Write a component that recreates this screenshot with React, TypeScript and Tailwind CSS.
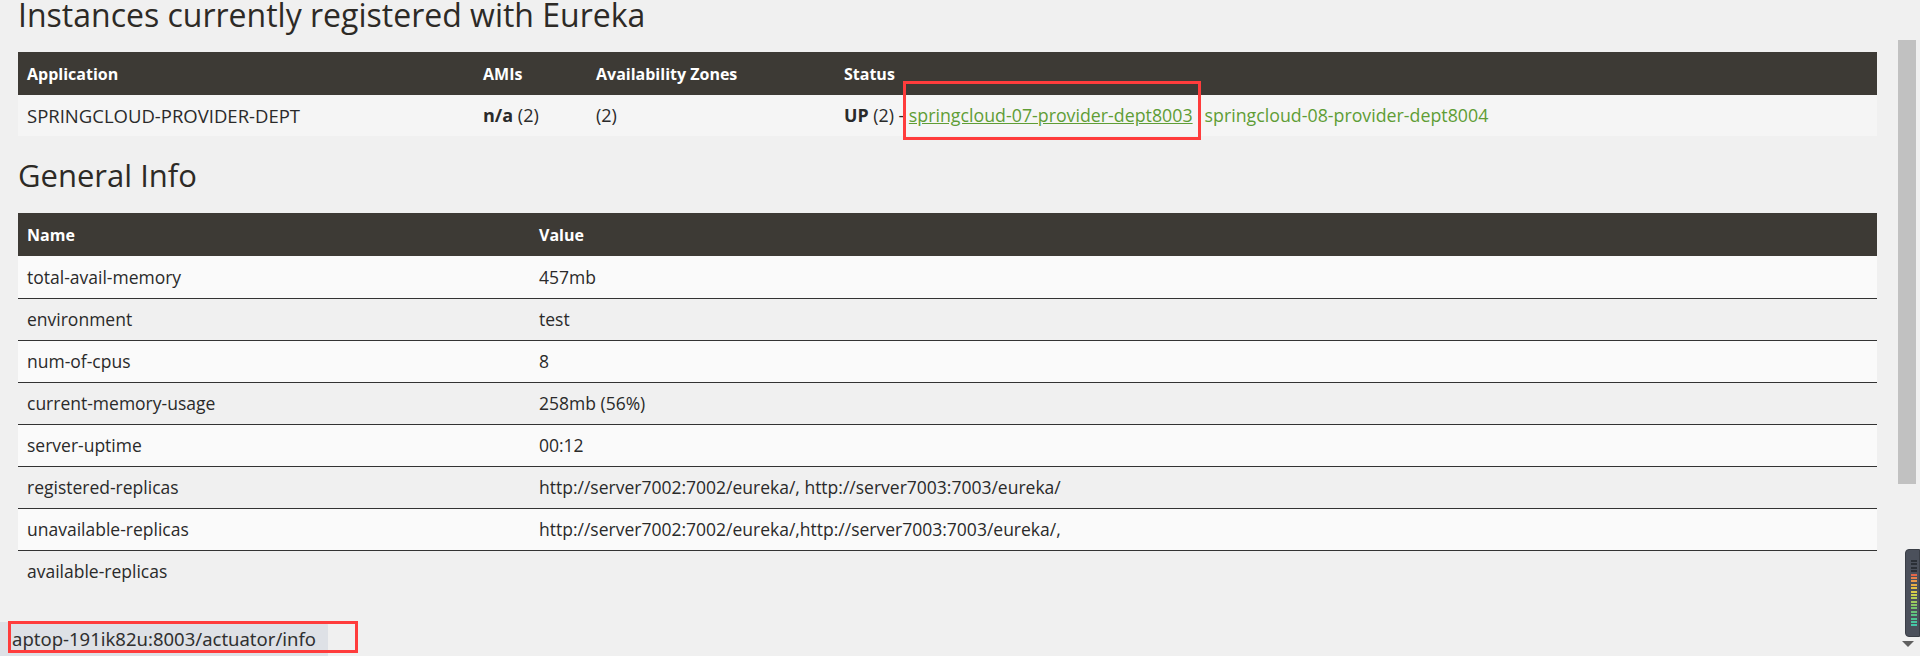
import React from "react";

const rows: [string, string][] = [
  ["total-avail-memory", "457mb"],
  ["environment", "test"],
  ["num-of-cpus", "8"],
  ["current-memory-usage", "258mb (56%)"],
  ["server-uptime", "00:12"],
  ["registered-replicas", "http://server7002:7002/eureka/, http://server7003:7003/eureka/"],
  ["unavailable-replicas", "http://server7002:7002/eureka/,http://server7003:7003/eureka/,"],
  ["available-replicas", ""],
];

const meterColors = [
  "#2b2f36", "#2b2f36", "#2b2f36", "#2b2f36",
  "#e2664a", "#e6804a", "#e8984a", "#e6ac45", "#e3bf45", "#d9cc47", "#c9d04d",
  "#b5cf55", "#9fcb5c", "#8bc764", "#77c46d", "#67c378", "#5ac384", "#4fc491", "#48c59d", "#44c7a8",
];

function Meter() {
  return (
    <div className="absolute right-0 top-[549px] w-[15px] h-[88px] rounded-l-[4px] bg-[#4b505b] border border-[#3a3e46] flex flex-col items-end pr-[2px] pt-[10px] gap-[1.4px]">
      {meterColors.map((c, i) => (
        <div key={i} className="w-[6px] h-[2px]" style={{ backgroundColor: c }} />
      ))}
    </div>
  );
}

export default function App() {
  return (
    <div
      className="relative w-[1920px] h-[656px] overflow-hidden bg-[#f0f0f0] text-[#2a2a2a] flex"
      style={{ fontFamily: '"Open Sans", "Noto Sans", sans-serif' }}
    >
      <div className="w-[1877px] pl-[18px] flex flex-col">
        <h2 className="pt-[1px] text-[32px] leading-[28px] text-[#2d2a26] font-normal">
          Instances currently registered with Eureka
        </h2>
        <table className="mt-[23px] w-full table-fixed border-collapse text-[18px]">
          <colgroup>
            <col className="w-[456px]" />
            <col className="w-[113px]" />
            <col className="w-[248px]" />
            <col />
          </colgroup>
          <thead>
            <tr className="bg-[#3d3a35] text-white h-[43px] text-[16px] text-left">
              <th className="pl-[9px] font-bold">Application</th>
              <th className="pl-[9px] font-bold">AMIs</th>
              <th className="pl-[9px] font-bold">Availability Zones</th>
              <th className="pl-[9px] font-bold">Status</th>
            </tr>
          </thead>
          <tbody>
            <tr className="bg-[#f5f5f5] h-[41px]">
              <td className="pl-[9px] text-[18.5px]">SPRINGCLOUD-PROVIDER-DEPT</td>
              <td className="pl-[9px]">
                <b>n/a</b> (2)
              </td>
              <td className="pl-[9px]">(2)</td>
              <td className="pl-[9px] whitespace-nowrap text-[17.8px]">
                <b>UP</b> (2) - <a className="text-[#5f9d35] underline">springcloud-07-provider-dept8003</a>
                <a className="text-[#5f9d35] ml-[12px]">springcloud-08-provider-dept8004</a>
              </td>
            </tr>
          </tbody>
        </table>

        <h2 className="mt-[25px] text-[31px] leading-[28px] text-[#2d2a26] font-normal">General Info</h2>
        <table className="mt-[24px] w-full table-fixed border-collapse text-[17.5px]">
          <colgroup>
            <col className="w-[512px]" />
            <col />
          </colgroup>
          <thead>
            <tr className="bg-[#3d3a35] text-white h-[43px] text-[16px] text-left">
              <th className="pl-[9px] font-bold">Name</th>
              <th className="pl-[9px] font-bold">Value</th>
            </tr>
          </thead>
          <tbody>
            {rows.map(([n, v], i) => (
              <tr
                key={n}
                className={
                  (i % 2 === 0 ? "bg-[#fafafa] " : "bg-[#f0f0f0] ") +
                  (i === rows.length - 1 ? "h-[42px]" : "h-[42px] border-b border-[#333]")
                }
              >
                <td className="pl-[9px]">{n}</td>
                <td className="pl-[9px]">{v}</td>
              </tr>
            ))}
          </tbody>
        </table>
      </div>

      {/* scrollbar */}
      <div className="w-[43px] flex flex-col items-end pr-[4px] pt-[40px]">
        <div className="w-[18px] h-[444px] bg-[#c1c1c1]" />
      </div>

      {/* status bubble */}
      <div
        className="absolute left-0 bottom-0 w-[328px] h-[34px] bg-[#dee1e6] rounded-tr-[4px] pl-[12px] flex items-center text-[18.5px] text-[#303030]"
        style={{ fontFamily: '"Noto Sans", "Open Sans", sans-serif' }}
      >
        aptop-191ik82u:8003/actuator/info
      </div>

      {/* annotation boxes */}
      <div className="absolute left-[903px] top-[81px] w-[298px] h-[59px] border-[3px] border-[#ff3c3c]" />
      <div className="absolute left-[8px] top-[621px] w-[350px] h-[32px] border-[3px] border-[#ff3c3c]" />

      <Meter />
      <div className="absolute left-[1902px] top-[641px] w-0 h-0 border-l-[6px] border-r-[6px] border-t-[6px] border-l-transparent border-r-transparent border-t-[#606060]" />
    </div>
  );
}
